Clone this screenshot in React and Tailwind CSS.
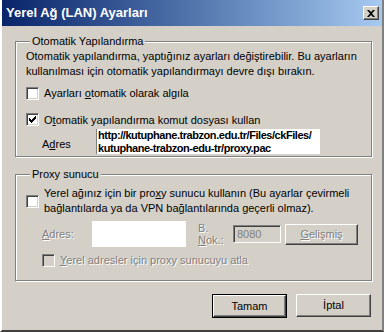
import React from "react";

const sunken =
  "border border-t-[#808080] border-l-[#808080] border-b-white border-r-white shadow-[inset_1px_1px_0_#404040,inset_-1px_-1px_0_#d4d0c8]";
const raised =
  "border border-t-white border-l-white border-b-[#404040] border-r-[#404040] shadow-[inset_-1px_-1px_0_#808080,inset_1px_1px_0_#d4d0c8]";
const etched =
  "border border-[#808080] shadow-[inset_1px_1px_0_#fff,1px_1px_0_#fff]";
const dim = "text-[#808080] [text-shadow:1px_1px_0_#fff]";

function Check({ checked, disabled }) {
  return (
    <span className={`flex h-[13px] w-[13px] shrink-0 items-center justify-center ${sunken} ${disabled ? "bg-[#d4d0c8]" : "bg-white"}`}>
      {checked && (
        <svg width="7" height="7" viewBox="0 0 7 7">
          <path d="M0 2h1v1h1v1h1V3h1V2h1V1h1V0h1v3H6v1H5v1H4v1H3v1H2V6H1V5H0z" fill="#000" />
        </svg>
      )}
    </span>
  );
}

function Group({ title, className, children }) {
  return (
    <fieldset className={`${etched} px-[10px] ${className}`}>
      <legend className="ml-[4px] bg-[#d4d0c8] px-[2px] leading-[14px]">{title}</legend>
      {children}
    </fieldset>
  );
}

export default function App() {
  return (
    <div className="flex h-[332px] w-[384px] flex-col border-b-2 border-l-2 border-r-2 border-b-[#404040] border-l-white border-r-[#808080] bg-[#d4d0c8] font-['Tahoma','Liberation_Sans',sans-serif] text-[11px] text-black">
      <div className="flex h-[26px] shrink-0 items-center justify-between bg-gradient-to-r from-[#0a246a] to-[#a6caf0] pl-[4px] pr-[3px]">
        <span className="text-[13px] font-bold text-white">Yerel Ağ (LAN) Ayarları</span>
        <span className={`flex h-[14px] w-[16px] items-center justify-center bg-[#d4d0c8] ${raised}`}>
          <svg width="8" height="7" viewBox="0 0 8 7">
            <path d="M0 0h2l2 2 2-2h2L5 3.5 8 7H6L4 5 2 7H0l3-3.5z" fill="#000" />
          </svg>
        </span>
      </div>

      <div className="flex flex-1 flex-col pl-[13px] pr-[10px]">
        <Group title="Otomatik Yapılandırma" className="mt-[8px] h-[123px]">
          <div className="mt-[1px] whitespace-nowrap leading-[15px]">
            <div>Otomatik yapılandırma, yaptığınız ayarları değiştirebilir. Bu ayarların</div>
            <div>kullanılması için otomatik yapılandırmayı devre dışı bırakın.</div>
          </div>
          <label className="mt-[6px] flex items-center gap-[5px]">
            <Check />
            <span>Ayarları <u>o</u>tomatik olarak algıla</span>
          </label>
          <label className="mt-[10px] flex items-center gap-[5px]">
            <Check checked />
            <span>O<u>t</u>omatik yapılandırma komut dosyası kullan</span>
          </label>
          <div className="mt-[1px] flex items-center">
            <span className="ml-[16px] mt-[5px] w-[54px]">A<u>d</u>res</span>
            <div className="flex h-[25px] w-[224px] flex-col justify-center border-l border-[#808080] bg-white pl-[1px] text-[11px] font-bold leading-[13px] tracking-[-0.45px]">
              <div>http://kutuphane.trabzon.edu.tr/Files/ckFiles/</div>
              <div>kutuphane-trabzon-edu-tr/proxy.pac</div>
            </div>
          </div>
        </Group>

        <Group title="Proxy sunucu" className="mt-[10px] h-[114px]">
          <div className="mt-[5px] flex items-center gap-[5px]">
            <Check />
            <div className="whitespace-nowrap leading-[15px]">
              <div>Yerel ağınız için bir pro<u>x</u>y sunucu kullanın (Bu ayarlar çevirmeli</div>
              <div>bağlantılarda ya da VPN bağlantılarında geçerli olmaz).</div>
            </div>
          </div>
          <div className="mt-[5px] flex items-center">
            <span className={`ml-[16px] w-[50px] ${dim}`}><u>A</u>dres:</span>
            <div className="h-[26px] w-[94px] bg-white" />
            <div className={`ml-[12px] w-[35px] leading-[12px] ${dim}`}>
              <div>B.</div>
              <div><u>N</u>ok.:</div>
            </div>
            <div className={`flex h-[18px] w-[48px] items-center pl-[3px] ${sunken} ${dim} [text-shadow:none]`}>8080</div>
            <div className={`ml-[4px] flex h-[21px] w-[73px] items-center justify-center ${raised} ${dim}`}>
              <span><u>G</u>elişmiş</span>
            </div>
          </div>
          <label className="mt-[5px] ml-[16px] flex items-center gap-[5px]">
            <Check disabled />
            <span className={dim}><u>Y</u>erel adresler için proxy sunucuyu atla</span>
          </label>
        </Group>

        <div className="mt-[13px] flex justify-end gap-[9px] pr-[1px]">
          <button type="button" className="h-[24px] w-[75px] border border-black">
            <span className={`flex h-full w-full items-center justify-center ${raised}`}>Tamam</span>
          </button>
          <button type="button" className={`flex h-[23px] w-[75px] items-center justify-center ${raised}`}>
            İptal
          </button>
        </div>
      </div>
    </div>
  );
}
